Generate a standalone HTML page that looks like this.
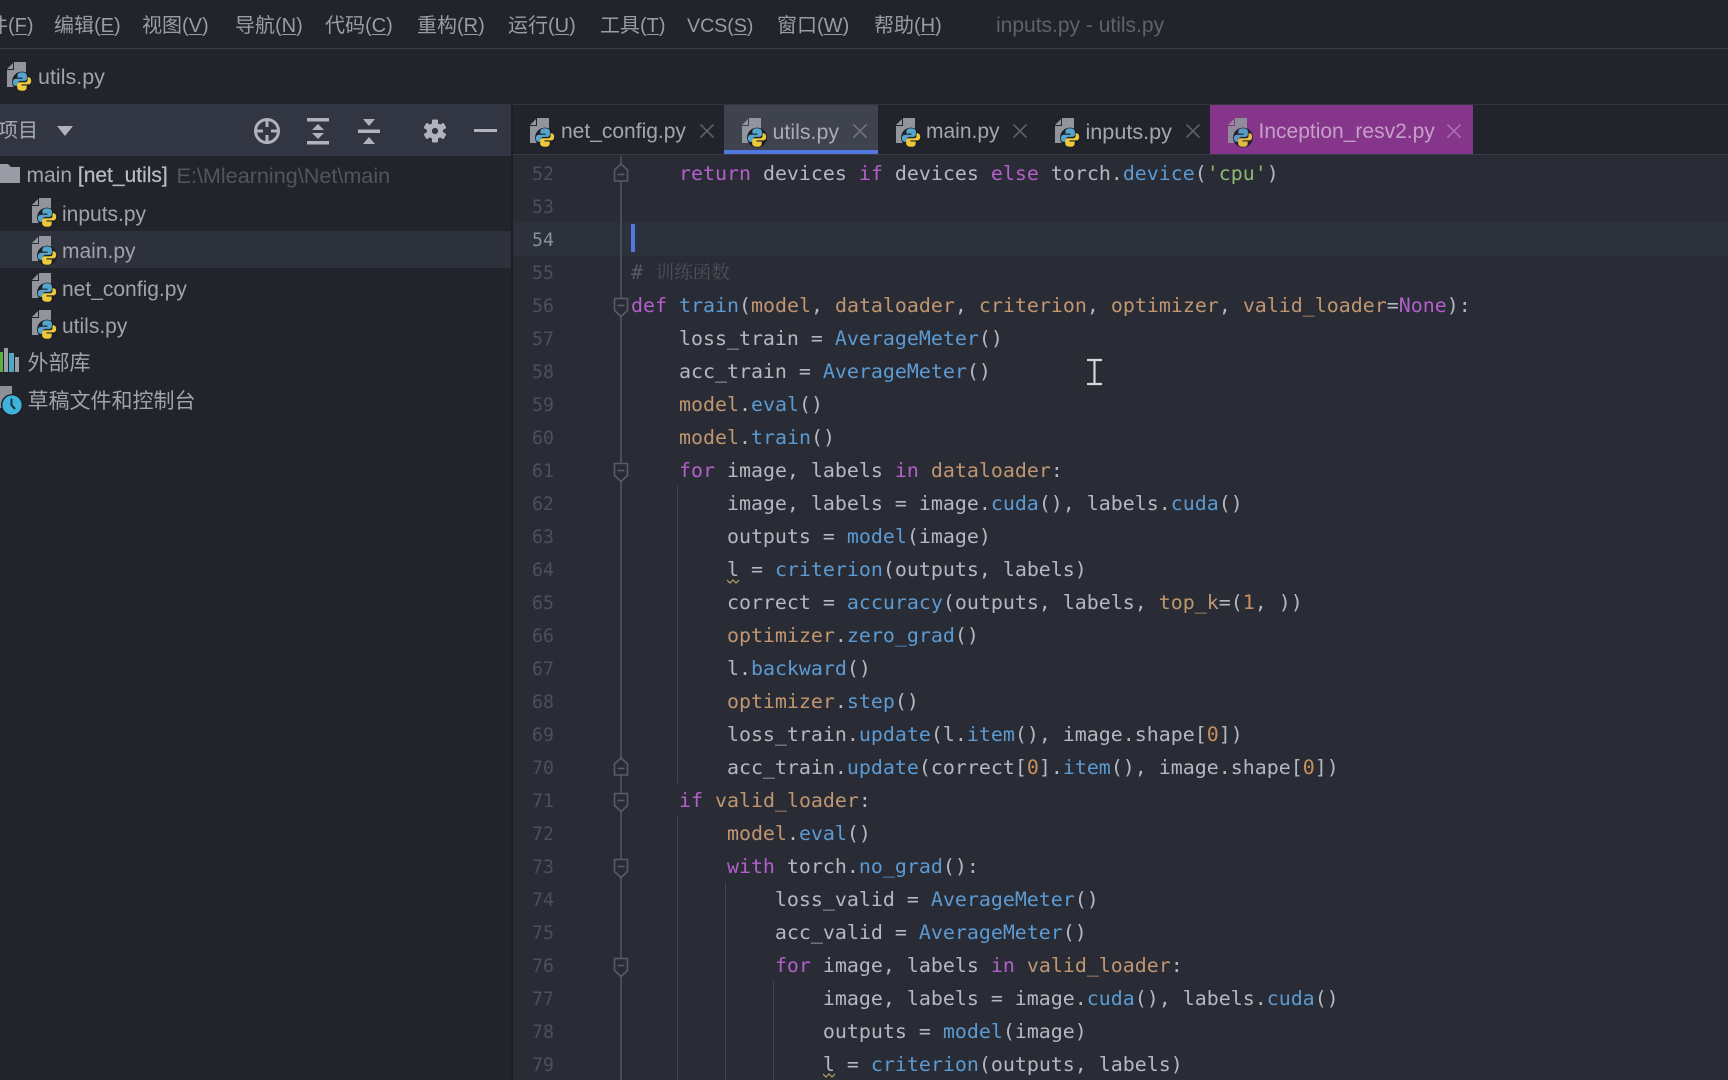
<!DOCTYPE html>
<html><head><meta charset="utf-8">
<style>
html{margin:0;padding:0;background:#21242b;width:1728px;height:1080px;overflow:hidden;}
body{margin:0;padding:0;background:#21242b;width:1728px;height:1080px;overflow:hidden;position:relative;font-family:"Liberation Sans","Noto Sans CJK SC",sans-serif;color:#a3a6ae;font-size:20px;}
.a{position:absolute;}
.t{position:absolute;white-space:nowrap;}
.m{top:8px;line-height:36px;font-size:20px;color:#999ca4;}
u{text-decoration-thickness:1px;text-underline-offset:2px;}
.tab{top:107px;line-height:50px;font-size:21px;color:#a3a6ae;}
.tr{line-height:34px;font-size:21px;color:#a0a3ab;}
pre{margin:0;position:absolute;overflow:hidden;font-family:"DejaVu Sans Mono","Liberation Mono",monospace;}
#code{left:631px;top:157px;height:923px;font-size:19.93px;line-height:33px;color:#b4b8c0;}
#nums{left:532px;top:158px;height:922px;font-size:18.2px;line-height:33px;color:#4c5059;}
.k{color:#b45fcb}.f{color:#5b9ad2}.p{color:#c09670}.s{color:#8dba72}.n{color:#c98f5e}
.c{color:#565a63}.c span{font-family:"Noto Serif CJK SC",serif;font-size:18.5px;color:#4d5159;position:relative;left:-4px}
</style></head>
<body>
<svg width="0" height="0" style="position:absolute">
<defs>
<g id="py">
<path d="M7 0H19V25H0V8H7Z" fill="#92959d"/>
<path d="M0 7L6 1V7Z" fill="#92959d"/>
<g transform="translate(5.5,9.5) scale(1.06)">
<circle cx="9" cy="9.5" r="9.4" fill="#1d1f24"/>
<path d="M9 .8C5.8 .8 4.6 2 4.6 4.2V5.8H9.5V6.8H3.2C1.5 6.8 .4 8.2 .4 10.2C.4 12.4 1.5 13.6 3.2 13.6H5.2V11C5.2 9.6 6.2 8.8 7.5 8.8H11.2C12.6 8.8 13.6 7.8 13.6 6.4V4C13.6 2 12 .8 9 .8Z" fill="#55a4cc"/>
<path d="M9 18.2C12.2 18.2 13.4 17 13.4 14.8V13.2H8.5V12.2H14.8C16.5 12.2 17.6 10.8 17.6 8.8C17.6 6.6 16.5 5.4 14.8 5.4H14.2V8C14.2 9.5 12.8 10.2 11.4 10.2H6.8C5.4 10.2 4.4 11.2 4.4 12.6V15C4.4 17 6 18.2 9 18.2Z" fill="#ecc83c"/>
</g>
</g>
<g id="fs"><path d="M-6.5 -6.5H6.5V5.5L0 11.5L-6.5 5.5Z" fill="#292c35" stroke="#585c65" stroke-width="1.6"/><path d="M-3.5 0.5H3.5" stroke="#585c65" stroke-width="1.6"/></g>
<g id="fe"><path d="M-6.5 8H6.5V-3L0 -9L-6.5 -3Z" fill="#292c35" stroke="#585c65" stroke-width="1.6"/><path d="M-3.5 1.5H3.5" stroke="#585c65" stroke-width="1.6"/></g>
<g id="x"><path d="M-6.5 -6.5L6.5 6.5M6.5 -6.5L-6.5 6.5" stroke-width="1.6" fill="none"/></g>
</defs>
</svg>

<!-- menu bar -->
<div class="a" style="left:0;top:48px;width:1728px;height:1px;background:#3a3d45"></div>
<div class="t m" style="left:-12px">件(<u>F</u>)</div>
<div class="t m" style="left:54px">编辑(<u>E</u>)</div>
<div class="t m" style="left:142px">视图(<u>V</u>)</div>
<div class="t m" style="left:235px">导航(<u>N</u>)</div>
<div class="t m" style="left:325px">代码(<u>C</u>)</div>
<div class="t m" style="left:417px">重构(<u>R</u>)</div>
<div class="t m" style="left:508px">运行(<u>U</u>)</div>
<div class="t m" style="left:600px">工具(<u>T</u>)</div>
<div class="t m" style="left:687px;font-size:19.6px">VCS(<u>S</u>)</div>
<div class="t m" style="left:777px">窗口(<u>W</u>)</div>
<div class="t m" style="left:874px">帮助(<u>H</u>)</div>
<div class="t m" style="left:996px;color:#5f626a;font-size:21px">inputs.py - utils.py</div>

<!-- breadcrumb -->
<svg class="a" style="left:7px;top:62px" width="28" height="30"><use href="#py"/></svg>
<div class="t" style="left:38px;top:60px;line-height:34px;font-size:21.5px;color:#a0a3ab">utils.py</div>

<!-- sidebar toolbar -->
<div class="a" style="left:0;top:104px;width:512px;height:52px;background:#323643"></div>
<div class="t" style="left:-2px;top:114px;line-height:34px;font-size:20px;color:#a8abb3">项目</div>
<svg class="a" style="left:56px;top:125px" width="18" height="12"><path d="M1 1H17L9 11Z" fill="#b0b3bb"/></svg>
<svg class="a" style="left:252px;top:116px" width="30" height="30" fill="none" stroke="#b0b3bb">
<circle cx="15" cy="15" r="11.5" stroke-width="3"/>
<path d="M15 3V11M15 19V27M3 15H11M19 15H27" stroke-width="3"/>
</svg>
<svg class="a" style="left:304px;top:116px" width="28" height="30" fill="#b0b3bb">
<rect x="3" y="2" width="22" height="3.5"/><rect x="3" y="25" width="22" height="3.5"/>
<path d="M14 8L20 14H8Z"/><path d="M14 23L20 17H8Z"/>
</svg>
<svg class="a" style="left:355px;top:116px" width="28" height="30" fill="#b0b3bb">
<rect x="3" y="13.5" width="22" height="3.5"/>
<path d="M8 3H20L14 10Z"/><path d="M8 28H20L14 21Z"/>
</svg>
<svg class="a" style="left:420px;top:116px" width="30" height="30">
<g fill="#b0b3bb">
<rect x="12" y="3.5" width="6" height="23" rx="1"/>
<rect x="12" y="3.5" width="6" height="23" rx="1" transform="rotate(60 15 15)"/>
<rect x="12" y="3.5" width="6" height="23" rx="1" transform="rotate(120 15 15)"/>
</g>
<circle cx="15" cy="15" r="5.6" fill="#323643" stroke="#b0b3bb" stroke-width="5"/>
</svg>
<div class="a" style="left:474px;top:129px;width:23px;height:3px;background:#b0b3bb"></div>

<!-- tree -->
<div class="a" style="left:0;top:231px;width:512px;height:37px;background:#2d313b"></div>
<svg class="a" style="left:0;top:162px" width="22" height="22"><path d="M-3 2H8L11 5H20V21H-3Z" fill="#9a9da5"/></svg>
<div class="t tr" style="left:26.5px;top:159px">main <span style="color:#b8bbc3;-webkit-text-stroke:.25px #b8bbc3">[net_utils]</span></div>
<div class="t tr" style="left:176.5px;top:159px;color:#51555e;font-size:21.6px">E:\Mlearning\Net\main</div>
<svg class="a" style="left:32px;top:198px" width="28" height="30"><use href="#py"/></svg>
<div class="t tr" style="left:62px;top:198px">inputs.py</div>
<svg class="a" style="left:32px;top:236px" width="28" height="30"><use href="#py"/></svg>
<div class="t tr" style="left:62px;top:235px">main.py</div>
<svg class="a" style="left:32px;top:273px" width="28" height="30"><use href="#py"/></svg>
<div class="t tr" style="left:62px;top:273px">net_config.py</div>
<svg class="a" style="left:32px;top:310px" width="28" height="30"><use href="#py"/></svg>
<div class="t tr" style="left:62px;top:310px">utils.py</div>
<svg class="a" style="left:0;top:346px" width="22" height="28">
<rect x="0" y="6" width="3" height="20" fill="#5cb040"/><rect x="4" y="2" width="4" height="24" fill="#9a9da5"/>
<rect x="9" y="7" width="5" height="19" fill="#52a8c4"/><rect x="15" y="11" width="4" height="15" fill="#9a9da5"/>
</svg>
<div class="t tr" style="left:27.5px;top:347px">外部库</div>
<svg class="a" style="left:0;top:384px" width="24" height="34">
<path d="M-2 2H12V24H-2Z" fill="#8d9098"/>
<circle cx="12" cy="21" r="11" fill="#1d1f24"/>
<circle cx="12" cy="21" r="9.6" fill="#3fb3dc"/>
<path d="M11.5 14.5V21L15 25" stroke="#16323f" stroke-width="2" fill="none"/>
</svg>
<div class="t tr" style="left:27.5px;top:385px">草稿文件和控制台</div>

<!-- tabs -->
<div class="a" style="left:512px;top:104px;width:1216px;height:1px;background:#33363e"></div>
<div class="a" style="left:511px;top:104px;width:2px;height:976px;background:#1d1f25"></div>
<div class="a" style="left:724px;top:105px;width:154px;height:46px;background:#3f434d"></div>
<div class="a" style="left:724px;top:150px;width:154px;height:6px;background:#5277e0"></div>
<div class="a" style="left:1210px;top:105px;width:263px;height:49px;background:#85368a"></div>
<svg class="a" style="left:530px;top:118px" width="28" height="30"><use href="#py"/></svg>
<div class="t tab" style="left:561px">net_config.py</div>
<svg class="a" style="left:699px;top:123px" width="16" height="16"><use href="#x" x="8" y="8" stroke="#5d6068"/></svg>
<svg class="a" style="left:742px;top:118px" width="28" height="30"><use href="#py"/></svg>
<div class="t tab" style="left:772.5px;color:#a8abb3;font-size:21.4px">utils.py</div>
<svg class="a" style="left:852px;top:123px" width="16" height="16"><use href="#x" x="8" y="8" stroke="#70747d"/></svg>
<svg class="a" style="left:896px;top:118px" width="28" height="30"><use href="#py"/></svg>
<div class="t tab" style="left:926px">main.py</div>
<svg class="a" style="left:1012px;top:123px" width="16" height="16"><use href="#x" x="8" y="8" stroke="#5d6068"/></svg>
<svg class="a" style="left:1055px;top:118px" width="28" height="30"><use href="#py"/></svg>
<div class="t tab" style="left:1085.5px;top:106.5px;font-size:21.6px">inputs.py</div>
<svg class="a" style="left:1185px;top:123px" width="16" height="16"><use href="#x" x="8" y="8" stroke="#5d6068"/></svg>
<svg class="a" style="left:1228px;top:118px;opacity:.9" width="28" height="30"><use href="#py"/></svg>
<div class="t tab" style="left:1258.5px;color:#c79fc9">Inception_resv2.py</div>
<svg class="a" style="left:1446px;top:123px" width="16" height="16"><use href="#x" x="8" y="8" stroke="#ad6cb3"/></svg>

<!-- editor -->
<div class="a" style="left:513px;top:154px;width:1215px;height:926px;background:#292c35;border-top:1px solid #3a3d45;box-sizing:border-box"></div>
<div class="a" style="left:513px;top:223px;width:1215px;height:33px;background:#2d313b"></div>
<div class="a" style="left:631px;top:224px;width:4px;height:28px;background:#5277e0"></div>

<!-- guides -->
<div class="a" style="left:620px;top:156px;width:2px;height:924px;background:#484c55"></div>
<div class="a" style="left:677px;top:486px;width:1px;height:297px;background:#40444d"></div>
<div class="a" style="left:677px;top:816px;width:1px;height:264px;background:#40444d"></div>
<div class="a" style="left:725px;top:882px;width:1px;height:198px;background:#40444d"></div>
<div class="a" style="left:773px;top:981px;width:1px;height:99px;background:#40444d"></div>

<svg class="a" style="left:600px;top:0" width="42" height="1080">
<use href="#fe" x="21" y="173"/>
<use href="#fs" x="21" y="305"/>
<use href="#fs" x="21" y="470"/>
<use href="#fe" x="21" y="767"/>
<use href="#fs" x="21" y="800"/>
<use href="#fs" x="21" y="866"/>
<use href="#fs" x="21" y="965"/>
</svg>

<pre id="nums">52
53
<span style="color:#8b8f98">54</span>
55
56
57
58
59
60
61
62
63
64
65
66
67
68
69
70
71
72
73
74
75
76
77
78
79</pre>

<pre id="code">    <span class="k">return</span> devices <span class="k">if</span> devices <span class="k">else</span> torch.<span class="f">device</span>(<span class="s">'cpu'</span>)


<span class="c"># <span> 训练函数</span></span>
<span class="k">def</span> <span class="f">train</span>(<span class="p">model</span>, <span class="p">dataloader</span>, <span class="p">criterion</span>, <span class="p">optimizer</span>, <span class="p">valid_loader</span>=<span class="k">None</span>):
    loss_train = <span class="f">AverageMeter</span>()
    acc_train = <span class="f">AverageMeter</span>()
    <span class="p">model</span>.<span class="f">eval</span>()
    <span class="p">model</span>.<span class="f">train</span>()
    <span class="k">for</span> image, labels <span class="k">in</span> <span class="p">dataloader</span>:
        image, labels = image.<span class="f">cuda</span>(), labels.<span class="f">cuda</span>()
        outputs = <span class="f">model</span>(image)
        l = <span class="f">criterion</span>(outputs, labels)
        correct = <span class="f">accuracy</span>(outputs, labels, <span class="p">top_k</span>=(<span class="n">1</span>, ))
        <span class="p">optimizer</span>.<span class="f">zero_grad</span>()
        l.<span class="f">backward</span>()
        <span class="p">optimizer</span>.<span class="f">step</span>()
        loss_train.<span class="f">update</span>(l.<span class="f">item</span>(), image.shape[<span class="n">0</span>])
        acc_train.<span class="f">update</span>(correct[<span class="n">0</span>].<span class="f">item</span>(), image.shape[<span class="n">0</span>])
    <span class="k">if</span> <span class="p">valid_loader</span>:
        <span class="p">model</span>.<span class="f">eval</span>()
        <span class="k">with</span> torch.<span class="f">no_grad</span>():
            loss_valid = <span class="f">AverageMeter</span>()
            acc_valid = <span class="f">AverageMeter</span>()
            <span class="k">for</span> image, labels <span class="k">in</span> <span class="p">valid_loader</span>:
                image, labels = image.<span class="f">cuda</span>(), labels.<span class="f">cuda</span>()
                outputs = <span class="f">model</span>(image)
                l = <span class="f">criterion</span>(outputs, labels)</pre>

<!-- wavy -->
<svg class="a" style="left:727px;top:579px" width="13" height="6"><path d="M0 1L3 4L6 1L9 4L12 1" stroke="#b3a06a" stroke-width="1.2" fill="none"/></svg>
<svg class="a" style="left:823px;top:1073px" width="13" height="6"><path d="M0 1L3 4L6 1L9 4L12 1" stroke="#b3a06a" stroke-width="1.2" fill="none"/></svg>

<!-- cursor -->
<svg class="a" style="left:1086px;top:358px" width="18" height="30"><path d="M1 2H16M8.5 2V26M1 26H16" stroke="#d5d6da" stroke-width="2.2" fill="none"/></svg>
</body></html>
